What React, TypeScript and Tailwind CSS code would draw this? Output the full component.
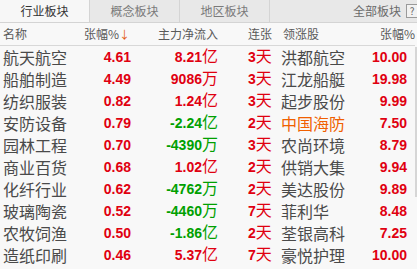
import React from "react";

type Row = {
  name: string;
  pct: string;
  flow: string;
  unit: string;
  flowUp: boolean;
  days: string;
  lead: string;
  leadOrange?: boolean;
  leadPct: string;
};

const rows: Row[] = [
  { name: "航天航空", pct: "4.61", flow: "8.21", unit: "亿", flowUp: true, days: "3", lead: "洪都航空", leadPct: "10.00" },
  { name: "船舶制造", pct: "4.49", flow: "9086", unit: "万", flowUp: true, days: "3", lead: "江龙船艇", leadPct: "19.98" },
  { name: "纺织服装", pct: "0.82", flow: "1.24", unit: "亿", flowUp: true, days: "3", lead: "起步股份", leadPct: "9.99" },
  { name: "安防设备", pct: "0.79", flow: "-2.24", unit: "亿", flowUp: false, days: "2", lead: "中国海防", leadOrange: true, leadPct: "7.50" },
  { name: "园林工程", pct: "0.70", flow: "-4390", unit: "万", flowUp: false, days: "3", lead: "农尚环境", leadPct: "8.79" },
  { name: "商业百货", pct: "0.68", flow: "1.02", unit: "亿", flowUp: true, days: "2", lead: "供销大集", leadPct: "9.94" },
  { name: "化纤行业", pct: "0.62", flow: "-4762", unit: "万", flowUp: false, days: "2", lead: "美达股份", leadPct: "9.89" },
  { name: "玻璃陶瓷", pct: "0.52", flow: "-4460", unit: "万", flowUp: false, days: "7", lead: "菲利华", leadPct: "8.48" },
  { name: "农牧饲渔", pct: "0.50", flow: "-1.86", unit: "亿", flowUp: false, days: "2", lead: "荃银高科", leadPct: "7.25" },
  { name: "造纸印刷", pct: "0.46", flow: "5.37", unit: "亿", flowUp: true, days: "7", lead: "豪悦护理", leadPct: "10.00" },
];

const cjk = { fontFamily: '"Noto Sans CJK SC", "Noto Sans", sans-serif' };
const num = { fontFamily: '"Liberation Sans", Arial, sans-serif' };

export default function App() {
  return (
    <div className="relative w-[417px] h-[269px] overflow-hidden bg-[#f8f8f8]" style={cjk}>
      {/* Tab bar */}
      <div className="flex h-[23px] bg-[#e8e8e8] border-b border-[#d4d4d4] text-[12px] leading-[22px]">
        <div className="w-[90px] bg-[#f7f7f7] border-r border-[#d4d4d4] text-center text-[#333]">行业板块</div>
        <div className="w-[90px] border-r border-[#d4d4d4] text-center text-[#7a7a7a]">概念板块</div>
        <div className="w-[90px] border-r border-[#d4d4d4] text-center text-[#7a7a7a]">地区板块</div>
        <div className="flex-1 flex items-center justify-end">
          <span className="text-[#6a6a6a] mr-[5px]">全部板块</span>
          <span className="w-[12px] h-[14px] border border-[#9a9a9a] bg-[#f2f2f2] text-[10px] leading-[12px] text-center text-[#666] -mr-[1px]">?</span>
        </div>
      </div>

      {/* Header */}
      <div className="grid grid-cols-[90px_40px_88px_63px_80px_56px] h-[23px] items-center border-b border-[#d8d8d8] text-[12px] leading-none text-[#5a5a5a] w-[415px] whitespace-nowrap">
        <div className="pl-[3px]">名称</div>
        <div className="flex items-center justify-end">
          <span>张幅%</span>
          <span className="text-[#e35a10] text-[11px] leading-none">↓</span>
        </div>
        <div className="text-right">主力净流入</div>
        <div className="pl-[30px]">连张</div>
        <div className="pl-[2px]">领涨股</div>
        <div className="text-right pr-[2px]">张幅%</div>
      </div>

      {/* Rows */}
      <div className="flex flex-col">
        {rows.map((r) => (
          <div
            key={r.name}
            className="grid grid-cols-[90px_41px_87px_63px_80px_46px] h-[22px] items-center whitespace-nowrap"
          >
            <div className="pl-[3px] text-[16px] text-[#4a4a4a] leading-none">{r.name}</div>
            <div className="text-right text-[14px] font-bold text-[#e00010]" style={num}>{r.pct}</div>
            <div className={`flex items-baseline justify-end ${r.flowUp ? "text-[#e00010]" : "text-[#00a000]"}`}>
              <span className="text-[14px] font-bold" style={num}>{r.flow}</span>
              <span className="text-[16px] leading-none">{r.unit}</span>
            </div>
            <div className="pl-[30px] flex items-baseline text-[#e00010]">
              <span className="text-[14px] font-bold" style={num}>{r.days}</span>
              <span className="text-[16px] leading-none">天</span>
            </div>
            <div className={`text-[16px] leading-none ${r.leadOrange ? "text-[#f06000]" : "text-[#4a4a4a]"}`}>{r.lead}</div>
            <div className="text-right text-[14px] font-bold text-[#e00010]" style={num}>{r.leadPct}</div>
          </div>
        ))}
      </div>

      {/* scrollbar thumb */}
      <div className="absolute right-0 top-[47px] w-[2px] h-[150px] bg-[#d6d6d6]" />
    </div>
  );
}
